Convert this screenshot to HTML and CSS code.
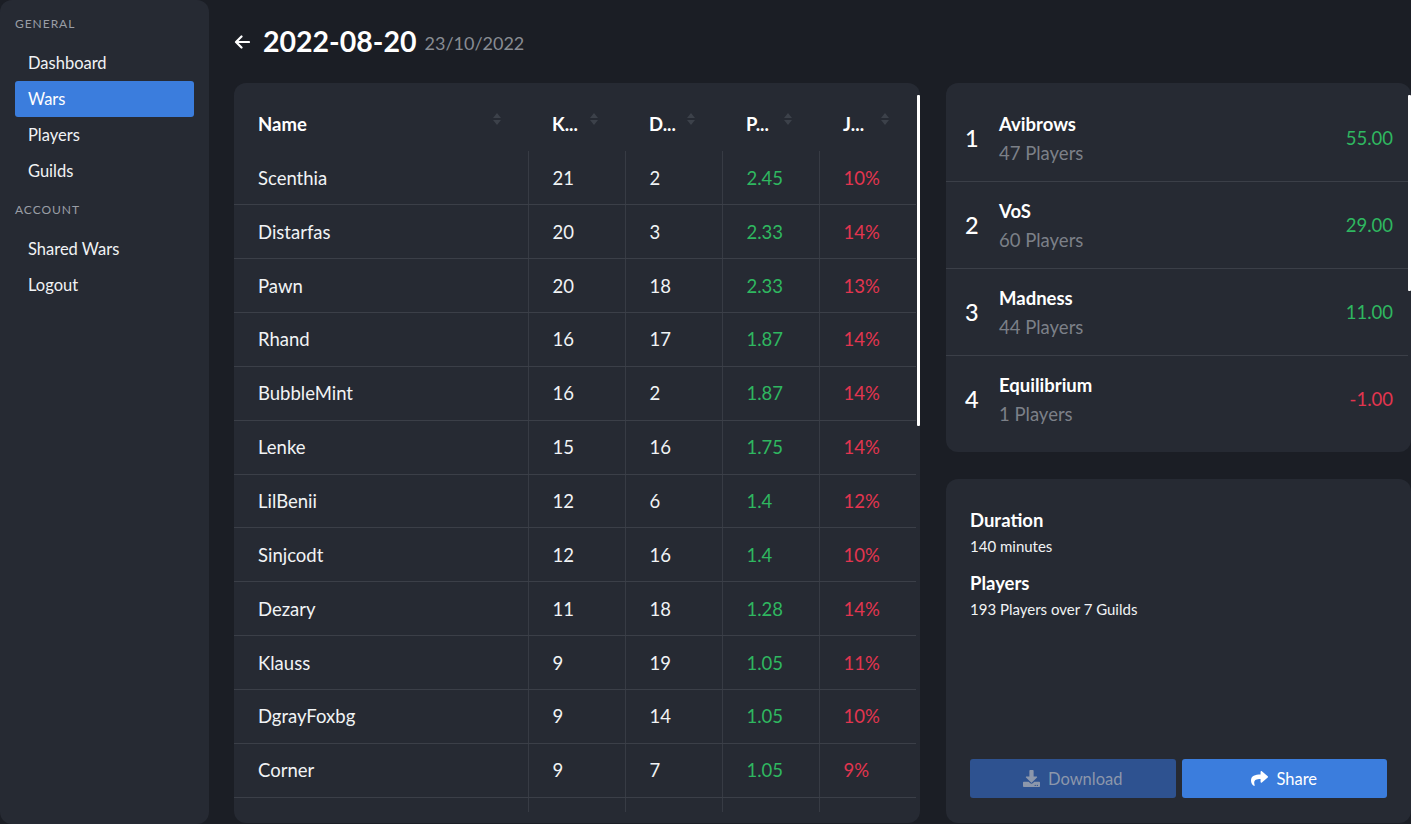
FILE: index.html
```html
<!DOCTYPE html>
<html lang="en">
<head>
<meta charset="utf-8">
<title>War 2022-08-20</title>
<link rel="stylesheet" href="styles.css">
</head>
<body>
<aside class="sidebar">
  <div class="nav-label">General</div>
  <nav class="nav">
    <a class="nav-item">Dashboard</a>
    <a class="nav-item active">Wars</a>
    <a class="nav-item">Players</a>
    <a class="nav-item">Guilds</a>
  </nav>
  <div class="nav-label">Account</div>
  <nav class="nav">
    <a class="nav-item">Shared Wars</a>
    <a class="nav-item">Logout</a>
  </nav>
</aside>

<main class="main">
  <header class="page-head">
    <svg class="back" width="16" height="14" viewBox="0 0 16 14"><path d="M15 7H2.5M7.5 1.5L2 7l5.5 5.5" fill="none" stroke="#fff" stroke-width="2.2" stroke-linecap="round" stroke-linejoin="round"/></svg>
    <h1 class="title">2022-08-20</h1>
    <span class="date">23/10/2022</span>
  </header>

  <div class="content">
    <section class="card table-card">
      <div class="table-scroll">
        <table class="stats">
          <colgroup><col class="c-name"><col class="c-num"><col class="c-num"><col class="c-num"><col class="c-num"></colgroup>
          <thead>
            <tr>
              <th><span>Name</span><svg class="sort" viewBox="0 0 8 14"><path d="M0 6L4 1l4 5zM0 8l4 5 4-5z"/></svg></th>
              <th><span>K...</span><svg class="sort" viewBox="0 0 8 14"><path d="M0 6L4 1l4 5zM0 8l4 5 4-5z"/></svg></th>
              <th><span>D...</span><svg class="sort" viewBox="0 0 8 14"><path d="M0 6L4 1l4 5zM0 8l4 5 4-5z"/></svg></th>
              <th><span>P...</span><svg class="sort" viewBox="0 0 8 14"><path d="M0 6L4 1l4 5zM0 8l4 5 4-5z"/></svg></th>
              <th><span>J...</span><svg class="sort" viewBox="0 0 8 14"><path d="M0 6L4 1l4 5zM0 8l4 5 4-5z"/></svg></th>
            </tr>
          </thead>
          <tbody>
            <tr><td>Scenthia</td><td>21</td><td>2</td><td class="pos">2.45</td><td class="neg">10%</td></tr>
            <tr><td>Distarfas</td><td>20</td><td>3</td><td class="pos">2.33</td><td class="neg">14%</td></tr>
            <tr><td>Pawn</td><td>20</td><td>18</td><td class="pos">2.33</td><td class="neg">13%</td></tr>
            <tr><td>Rhand</td><td>16</td><td>17</td><td class="pos">1.87</td><td class="neg">14%</td></tr>
            <tr><td>BubbleMint</td><td>16</td><td>2</td><td class="pos">1.87</td><td class="neg">14%</td></tr>
            <tr><td>Lenke</td><td>15</td><td>16</td><td class="pos">1.75</td><td class="neg">14%</td></tr>
            <tr><td>LilBenii</td><td>12</td><td>6</td><td class="pos">1.4</td><td class="neg">12%</td></tr>
            <tr><td>Sinjcodt</td><td>12</td><td>16</td><td class="pos">1.4</td><td class="neg">10%</td></tr>
            <tr><td>Dezary</td><td>11</td><td>18</td><td class="pos">1.28</td><td class="neg">14%</td></tr>
            <tr><td>Klauss</td><td>9</td><td>19</td><td class="pos">1.05</td><td class="neg">11%</td></tr>
            <tr><td>DgrayFoxbg</td><td>9</td><td>14</td><td class="pos">1.05</td><td class="neg">10%</td></tr>
            <tr><td>Corner</td><td>9</td><td>7</td><td class="pos">1.05</td><td class="neg">9%</td></tr>
            <tr><td></td><td></td><td></td><td></td><td></td></tr>
          </tbody>
        </table>
      </div>
      <div class="thumb thumb-table"></div>
    </section>

    <div class="side">
      <section class="card guilds">
        <div class="guild">
          <span class="rank">1</span>
          <div class="guild-info"><div class="guild-name">Avibrows</div><div class="guild-players">47 Players</div></div>
          <span class="guild-score pos">55.00</span>
        </div>
        <div class="guild">
          <span class="rank">2</span>
          <div class="guild-info"><div class="guild-name">VoS</div><div class="guild-players">60 Players</div></div>
          <span class="guild-score pos">29.00</span>
        </div>
        <div class="guild">
          <span class="rank">3</span>
          <div class="guild-info"><div class="guild-name">Madness</div><div class="guild-players">44 Players</div></div>
          <span class="guild-score pos">11.00</span>
        </div>
        <div class="guild">
          <span class="rank">4</span>
          <div class="guild-info"><div class="guild-name">Equilibrium</div><div class="guild-players">1 Players</div></div>
          <span class="guild-score neg">-1.00</span>
        </div>
        <div class="thumb thumb-guilds"></div>
      </section>

      <section class="card info">
        <div class="info-block">
          <div class="info-title">Duration</div>
          <div class="info-text">140 minutes</div>
        </div>
        <div class="info-block">
          <div class="info-title">Players</div>
          <div class="info-text">193 Players over 7 Guilds</div>
        </div>
        <div class="actions">
          <button class="btn btn-download">
            <svg class="btn-icon" viewBox="0 0 512 512"><path d="M216 0h80c13.3 0 24 10.7 24 24v168h87.7c17.8 0 26.7 21.5 14.1 34.1L269.7 378.3c-7.5 7.5-19.8 7.5-27.3 0L90.1 226.1c-12.6-12.6-3.7-34.1 14.1-34.1H192V24c0-13.3 10.7-24 24-24zm296 376v112c0 13.3-10.7 24-24 24H24c-13.3 0-24-10.700-24-24V376c0-13.3 10.7-24 24-24h146.7l49 49c20.1 20.1 52.5 20.1 72.6 0l49-49H488c13.3 0 24 10.7 24 24zm-124 88c0-11-9-20-20-20s-20 9-20 20 9 20 20 20 20-9 20-20zm64 0c0-11-9-20-20-20s-20 9-20 20 9 20 20 20 20-9 20-20z"/></svg>
            Download
          </button>
          <button class="btn btn-share">
            <svg class="btn-icon" viewBox="0 0 512 512"><path d="M503.7 189.8L327.7 37.9C312.3 24.5 288 35.3 288 56v80.1C127.4 137.9 0 170.1 0 322.3c0 61.4 39.6 122.3 83.3 154.1 13.7 9.9 33.1-2.5 28.1-18.6C66.1 312.8 132.9 274.3 288 272.1V360c0 20.7 24.3 31.5 39.7 18.2l176-152c11.1-9.6 11.1-26.800 0-36.400z"/></svg>
            Share
          </button>
        </div>
      </section>
    </div>
  </div>
</main>
</body>
</html>
```

FILE: styles.css
```css
* { box-sizing: border-box; }

html, body {
  margin: 0;
  height: 824px;
  overflow: hidden;
}

body {
  display: flex;
  background: #1b1e25;
  color: #f1f3f5;
  font-family: "Lato", "Noto Sans", "Liberation Sans", sans-serif;
}

/* Sidebar */
.sidebar {
  width: 209px;
  flex: none;
  height: 824px;
  background: #262a33;
  border-radius: 12px;
  padding: 15px 15px 0;
}

.nav-label {
  height: 18px;
  line-height: 18px;
  font-size: 12px;
  letter-spacing: 0.08em;
  text-transform: uppercase;
  color: #9a9ea6;
  margin-bottom: 12px;
}

.nav { margin-bottom: 12px; }

.nav-item {
  display: block;
  height: 36px;
  line-height: 36px;
  padding-left: 13px;
  font-size: 16.5px;
  color: #f1f3f5;
  border-radius: 3px;
}

.nav-item.active { background: #3b7ddd; color: #fff; }

/* Main */
.main {
  flex: 1;
  padding-left: 25px;
  display: flex;
  flex-direction: column;
  min-width: 0;
}

.page-head {
  height: 83px;
  flex: none;
  display: flex;
  align-items: center;
  padding-bottom: 1px;
}

.back { margin-right: 13px; margin-top: 1px; }

.title {
  margin: 0;
  font-size: 28.5px;
  font-weight: 700;
  color: #fff;
  line-height: 1;
}

.date {
  margin-left: 8px;
  margin-top: 3px;
  font-size: 18px;
  color: #888c93;
}

.content {
  display: flex;
  gap: 26px;
  height: 740px;
}

.card {
  background: #262a33;
  border-radius: 12px;
  position: relative;
}

/* Table card */
.table-card {
  width: 686px;
  flex: none;
  padding: 12px 0 11px;
  overflow: hidden;
}

.table-scroll {
  height: 717px;
  overflow: hidden;
  width: 682px;
}

.stats {
  width: 682px;
  table-layout: fixed;
  border-collapse: collapse;
  font-size: 18.5px;
}

.c-name { width: 294px; }
.c-num { width: 97px; }

.stats th {
  height: 56px;
  text-align: left;
  font-weight: 700;
  color: #fff;
  padding: 0 0 0 24px;
  position: relative;
  white-space: nowrap;
}

.stats th span { vertical-align: middle; }

.sort {
  position: absolute;
  right: 27px;
  top: 17px;
  width: 8px;
  height: 14px;
  fill: #3c414a;
}

.stats td {
  height: 53.85px;
  padding: 0 0 0 24px;
  border-bottom: 1px solid #3b3f48;
  color: #f1f3f5;
  white-space: nowrap;
}

.stats td + td { border-left: 1px solid #373b44; }

.pos { color: #2fb760 !important; }
.neg { color: #e2354f !important; }

.thumb {
  position: absolute;
  right: 0;
  width: 3px;
  background: #fff;
  border-radius: 1px;
}

.thumb-table { top: 12px; height: 331px; }

/* Side column */
.side {
  flex: 1;
  display: flex;
  flex-direction: column;
  gap: 27px;
  min-width: 0;
}

.guilds {
  height: 369px;
  padding: 12px 3px 0 0;
  flex: none;
}

.thumb-guilds { top: 12px; height: 196px; }

.guild {
  height: 87px;
  display: flex;
  align-items: center;
  padding: 0 15px 0 19px;
  border-bottom: 1px solid #3b3f48;
}

.guild:nth-child(4) { border-bottom: none; height: 86px; }

.rank {
  width: 34px;
  font-size: 23.5px;
  font-weight: 500;
  color: #fff;
  flex: none;
}

.guild-info { flex: 1; font-size: 18.5px; padding-top: 1px; }

.guild-name {
  font-weight: 700;
  color: #fff;
  line-height: 29px;
}

.guild-players {
  color: #7c8088;
  line-height: 29px;
}

.guild-score { font-size: 18.5px; }

/* Info card */
.info {
  flex: 1;
  padding: 28px 24px 25px;
  display: flex;
  flex-direction: column;
}

.info-block + .info-block { margin-top: 11px; }

.info-title {
  font-size: 18.5px;
  font-weight: 700;
  color: #fff;
  line-height: 26px;
}

.info-text {
  font-size: 15px;
  line-height: 26px;
  color: #f1f3f5;
}

.actions {
  margin-top: auto;
  display: flex;
  gap: 6px;
}

.btn {
  flex: 1;
  height: 39px;
  border: none;
  border-radius: 3px;
  font-family: inherit;
  font-size: 16.5px;
  display: flex;
  align-items: center;
  justify-content: center;
  gap: 8px;
  padding: 0;
}

.btn-icon { width: 17px; height: 17px; }

.btn-download { background: #2e5290; color: #8c97ab; }
.btn-download .btn-icon { fill: #8c97ab; }

.btn-share { background: #3b7ddd; color: #fff; }
.btn-share .btn-icon { fill: #fff; }
```
